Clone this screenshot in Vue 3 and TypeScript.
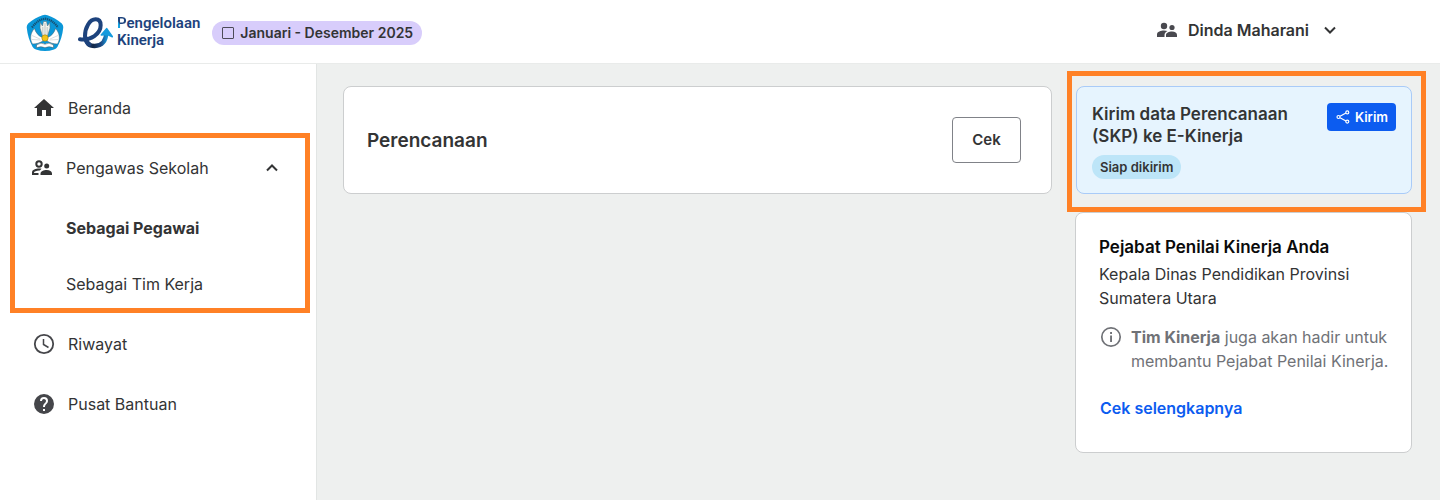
<script setup lang="ts">
import { ref } from 'vue'

const groupOpen = ref(true)
const period = 'Januari - Desember 2025'
const userName = 'Dinda Maharani'
const roles = [
  { label: 'Sebagai Pegawai', href: '#pegawai', active: true },
  { label: 'Sebagai Tim Kerja', href: '#tim-kerja', active: false },
]
</script>

<template>
  <div class="page">
    <header class="topbar">
      <a class="brand" href="#beranda" aria-label="Pengelolaan Kinerja">
        <svg class="emblem" viewBox="0 0 38 38" aria-hidden="true">
          <path d="M16.500 1.200Q19 .2 21.500 1.200 29 3.600 35.800 9.500 37.600 11.400 37.200 14 36.200 24 31.500 32.800 30.300 34.800 28 35.500 19 38.600 10 35.500 7.700 34.800 6.500 32.800 1.800 24 .8 14 .4 11.400 2.200 9.500 9 3.600 16.500 1.200Z" fill="#0b97d8" />
          <path d="M6 13.500Q11.500 5.700 19 4.700q7.500 1 13 8.800" fill="none" stroke="#174f70" stroke-width="2.200" stroke-dasharray="1.300 .7" />
          <path d="M14.300 8.500 16.500 12 17.500 7.500h3L21.500 12l2.200-3.500.3 5.500-2.500 8h-5L14 14Z" fill="#f3f4ee" stroke="#5a6a70" stroke-width=".5" />
          <path d="M16.800 13v8M19 9v12M21.200 13v8" stroke="#8a9598" stroke-width=".5" />
          <path d="M16.500 23.500C12 22 9.500 18 8.500 14.500 4.500 18.500 3.300 25 6.500 30c4 0 7-1 10.500-3ZM21.500 23.500c4.500-1.500 7-5.500 8-9 4 4 5.200 10.500 2 15.500-4 0-7-1-10.500-3Z" fill="#fff" stroke="#48606b" stroke-width=".5" />
          <path d="m6 21.500 8 3.500M6 25.500l8.500.5M32 21.500 24 25m8 .5-8.500.5" stroke="#b5bec0" stroke-width=".5" />
          <circle cx="19" cy="24" r="3.200" fill="#f3c419" stroke="#8a7416" stroke-width=".5" />
          <path d="M10.500 31q4.500-3.300 8.500-.8 4-2.500 8.500.8v2.700q-4.500-2-8.500 0-4-2-8.500 0Z" fill="#fff" stroke="#44545b" stroke-width=".5" />
        </svg>
        <svg class="mark" viewBox="186 34 105 99" aria-hidden="true">
          <defs>
            <linearGradient id="tail" x1="0" x2="1" y1="0" y2="0">
              <stop offset="0" stop-color="#1d437d" />
              <stop offset=".35" stop-color="#122747" />
              <stop offset=".75" stop-color="#1d4a85" />
              <stop offset="1" stop-color="#168fd0" />
            </linearGradient>
          </defs>
          <path d="M210 96c0 18 9 28 26 28 22 0 34-15 35-40" fill="none" stroke="url(#tail)" stroke-width="13" />
          <path d="M192 104c32 4 62-16 62-42 0-12-6-18-15-18-19 0-32 26-32 50 0 11 4 20 13 25" fill="none" stroke="#1d437d" stroke-width="12" stroke-linecap="round" stroke-linejoin="round" />
          <path d="M256 91 272 72 289 96 273 89Z" fill="#159bdd" stroke="#159bdd" stroke-width="5" stroke-linejoin="round" />
        </svg>
        <span class="brand-name"><span class="brand-initial">P</span>engelolaan<br />Kinerja</span>
      </a>
      <span class="period"><span class="period-box"></span>{{ period }}</span>
      <button class="user" type="button">
        <svg class="icon" viewBox="0 0 24 24" aria-hidden="true">
          <circle cx="9" cy="8" r="3.200" />
          <circle cx="17" cy="9.500" r="2.600" />
          <path d="M2 19v-2.500C2 13.500 6 12.500 9 12.500c1.200 0 2.500.2 3.500.5-1.800.9-3 2.200-3 4V19ZM11 19v-2c0-2.200 3-3.500 6-3.500s5 1.300 5 3.500v2Z" />
        </svg>
        <span>{{ userName }}</span>
        <svg class="chevron" viewBox="0 0 14 14" aria-hidden="true"><path d="m2 4.500 5 5 5-5" /></svg>
      </button>
    </header>

    <div class="body">
      <nav class="sidebar" aria-label="Menu utama">
        <a class="item" href="#beranda">
          <svg class="icon" viewBox="0 0 24 24" aria-hidden="true"><path d="M10 20v-6h4v6h5v-8h3L12 3 2 12h3v8Z" /></svg>
          Beranda
        </a>
        <div class="group">
          <button class="group-head" type="button" :aria-expanded="groupOpen" @click="groupOpen = !groupOpen">
            <svg class="icon" viewBox="0 0 24 24" aria-hidden="true">
              <circle cx="9" cy="8" r="2.700" fill="none" stroke="currentColor" stroke-width="2" />
              <circle cx="16.700" cy="10" r="2.500" />
              <path d="M2 19v-2.500C2 13.500 6 12.500 9 12.500c.9 0 1.800.1 2.600.3l-1.800 1.800C7 14.400 4 15.600 4 16.700V17h4.500v2ZM10.500 19v-1.500c0-2.200 3.200-3.500 6.200-3.500S22 15.300 22 17.500V19Z" />
            </svg>
            <span class="group-label">Pengawas Sekolah</span>
            <svg class="chevron" :class="{ closed: !groupOpen }" viewBox="0 0 14 14" aria-hidden="true"><path d="m2 9.500 5-5 5 5" /></svg>
          </button>
          <div v-if="groupOpen" class="roles">
            <a v-for="role in roles" :key="role.label" class="role" :class="{ active: role.active }" :href="role.href">{{ role.label }}</a>
          </div>
        </div>
        <a class="item" href="#riwayat">
          <svg class="icon soft" viewBox="0 0 24 24" aria-hidden="true">
            <circle cx="12" cy="12" r="9.200" fill="none" stroke="currentColor" stroke-width="1.800" />
            <path d="M11.500 7v5.500l5 3" fill="none" stroke="currentColor" stroke-width="1.500" />
          </svg>
          Riwayat
        </a>
        <a class="item" href="#bantuan">
          <svg class="icon soft" viewBox="0 0 24 24" aria-hidden="true">
            <path d="M12 2a10 10 0 1 0 0 20 10 10 0 0 0 0-20Zm1 17h-2v-2h2Zm2.070-7.750-.9.920C13.450 12.900 13 13.500 13 15h-2v-.5c0-1.100.450-2.100 1.170-2.830l1.240-1.260A2 2 0 1 0 10 9H8a4 4 0 1 1 8 0c0 .880-.360 1.680-.930 2.250Z" />
          </svg>
          Pusat Bantuan
        </a>
      </nav>

      <main class="content">
        <section class="card plan">
          <h1>Perencanaan</h1>
          <button class="check" type="button">Cek</button>
        </section>

        <aside class="side">
          <div class="highlight">
            <section class="send">
              <div class="send-info">
                <h2>Kirim data Perencanaan (SKP) ke E-Kinerja</h2>
                <span class="status">Siap dikirim</span>
              </div>
              <button class="send-button" type="button">
                <svg viewBox="0 0 14 14" aria-hidden="true">
                  <path d="M4 6.200 10 3M4 7.800 10 11" />
                  <circle cx="2.500" cy="7" r="1.500" />
                  <circle cx="11.300" cy="2.400" r="1.500" />
                  <circle cx="11.300" cy="11.600" r="1.500" />
                </svg>
                Kirim
              </button>
            </section>
          </div>
          <section class="card officer">
            <h2>Pejabat Penilai Kinerja Anda</h2>
            <p class="position">Kepala Dinas Pendidikan Provinsi Sumatera Utara</p>
            <div class="note">
              <svg class="icon" viewBox="0 0 24 24" aria-hidden="true">
                <circle cx="12" cy="12" r="9.200" fill="none" stroke="currentColor" stroke-width="1.700" />
                <path d="M11.100 7h1.900v1.900h-1.900ZM11.100 10.500h1.900V17h-1.900Z" />
              </svg>
              <p><strong>Tim Kinerja</strong> juga akan hadir untuk membantu Pejabat Penilai Kinerja.</p>
            </div>
            <a class="more" href="#selengkapnya">Cek selengkapnya</a>
          </section>
        </aside>
      </main>
    </div>
  </div>
</template>

<style>
body {
  margin: 0;
}
</style>

<style scoped>
.page {
  display: flex;
  flex-direction: column;
  min-height: 100vh;
  background: #eef0ef;
  color: #333435;
  font-family: Inter, "Liberation Sans", sans-serif;
  font-size: 16px;
  line-height: 24px;
}
.page *,
.page {
  box-sizing: border-box;
}
h1,
h2,
p {
  margin: 0;
}
a {
  color: inherit;
  text-decoration: none;
}
button {
  font: inherit;
  color: inherit;
  cursor: pointer;
}
.icon {
  flex: none;
  width: 24px;
  height: 24px;
  fill: currentColor;
}
.chevron {
  flex: none;
  width: 14px;
  height: 14px;
  fill: none;
  stroke: currentColor;
  stroke-width: 2;
}
.chevron.closed {
  transform: rotate(180deg);
}
.topbar {
  display: flex;
  align-items: center;
  height: 64px;
  padding: 2px 103px 0 26px;
  background: #fff;
  border-bottom: 1px solid #e9ebea;
}
.brand {
  display: flex;
  align-items: center;
}
.emblem {
  width: 38px;
  height: 38px;
}
.mark {
  width: 35px;
  height: 33px;
  margin-left: 14px;
}
.brand-name {
  margin: 0 0 2px 4px;
  color: #1d437d;
  font-family: Roboto, "Liberation Sans", sans-serif;
  font-size: 15px;
  font-weight: 600;
  line-height: 17px;
}
.brand-initial {
  background: linear-gradient(to top right, #12a0df 32%, #1d437d 38%);
  background-clip: text;
  color: transparent;
}
.period {
  display: flex;
  align-items: center;
  gap: 6px;
  height: 24px;
  margin-left: 12px;
  padding: 0 9px 0 10px;
  border-radius: 12px;
  background: #d8cdfb;
  font-size: 14px;
  font-weight: 600;
}
.period-box {
  width: 12px;
  height: 12px;
  border: 1px solid #4d4b58;
  border-radius: 1px;
}
.user {
  display: flex;
  align-items: center;
  margin: 0 0 6px auto;
  padding: 0;
  border: 0;
  background: none;
  font-weight: 600;
}
.user .icon {
  margin-right: 9px;
  color: #49494f;
}
.user .chevron {
  margin-left: 14px;
}
.body {
  display: flex;
  flex: 1;
}
.sidebar {
  flex: none;
  width: 317px;
  padding-top: 20px;
  border-right: 1px solid #e2e5e4;
  background: #fff;
}
.item {
  display: flex;
  align-items: center;
  gap: 12px;
  height: 48px;
  margin-bottom: 12px;
  padding-left: 32px;
}
.item:first-child {
  margin-bottom: 1px;
}
.icon.soft {
  color: #45464a;
}
.group {
  margin: 0 6px 7px 10px;
  border: 5px solid #ff8126;
}
.group-head {
  display: flex;
  align-items: center;
  width: 100%;
  height: 60px;
  padding: 0 26px 0 15px;
  border: 0;
  background: none;
  text-align: left;
}
.group-label {
  flex: 1;
  margin-left: 12px;
}
.roles {
  display: flex;
  flex-direction: column;
  gap: 8px;
  padding-top: 6px;
}
.role {
  display: flex;
  align-items: center;
  height: 48px;
  padding-left: 51px;
}
.role.active {
  font-weight: 700;
}
.content {
  display: flex;
  flex: 1;
  align-items: flex-start;
  min-width: 0;
  padding: 7px 14px 24px 26px;
}
.card {
  border: 1px solid #cccecf;
  border-radius: 8px;
  background: #fff;
}
.plan {
  display: flex;
  flex: 1;
  align-items: center;
  justify-content: space-between;
  height: 108px;
  margin: 15px 15px 0 0;
  padding: 0 30px 0 23px;
}
.plan h1 {
  padding-top: 2px;
  font-size: 19px;
  font-weight: 600;
}
.check {
  min-width: 69px;
  height: 46px;
  padding: 0 16px;
  border: 1px solid #808288;
  border-radius: 4px;
  background: #fff;
  font-size: 15px;
  font-weight: 600;
}
.side {
  flex: none;
  width: 359px;
}
.highlight {
  padding: 10px 9px 13px 4px;
  border: 5px solid #ff8126;
}
.send {
  display: flex;
  align-items: flex-start;
  justify-content: space-between;
  height: 108px;
  padding: 16px 15px 0;
  border: 1px solid #a9cbf8;
  border-radius: 8px;
  background: #e6f4fe;
}
.send h2 {
  max-width: 210px;
  font-size: 17px;
  font-weight: 600;
  line-height: 22px;
}
.status {
  display: inline-block;
  height: 24px;
  margin-top: 8px;
  padding: 0 8px;
  border-radius: 12px;
  background: #bde5f8;
  font-size: 13px;
  font-weight: 600;
}
.send-button {
  display: flex;
  flex: none;
  align-items: center;
  gap: 5px;
  height: 28px;
  padding: 0 8px 0 9px;
  border: 0;
  border-radius: 4px;
  background: #0c5cf0;
  color: #fff;
  font-size: 13px;
  font-weight: 600;
}
.send-button svg {
  width: 14px;
  height: 14px;
  fill: none;
  stroke: currentColor;
  stroke-width: 1.2;
}
.officer {
  margin: 0 14px 0 8px;
  padding: 22px 20px 32px 23px;
}
.officer h2 {
  color: #0a0a0a;
  font-size: 17px;
  font-weight: 600;
  line-height: 24px;
}
.position {
  margin-top: 3px;
}
.note {
  display: flex;
  gap: 8px;
  margin-top: 15px;
  color: #707277;
}
.more {
  display: inline-block;
  margin: 23px 0 0 1px;
  color: #0c5cf0;
  font-weight: 600;
}
</style>
